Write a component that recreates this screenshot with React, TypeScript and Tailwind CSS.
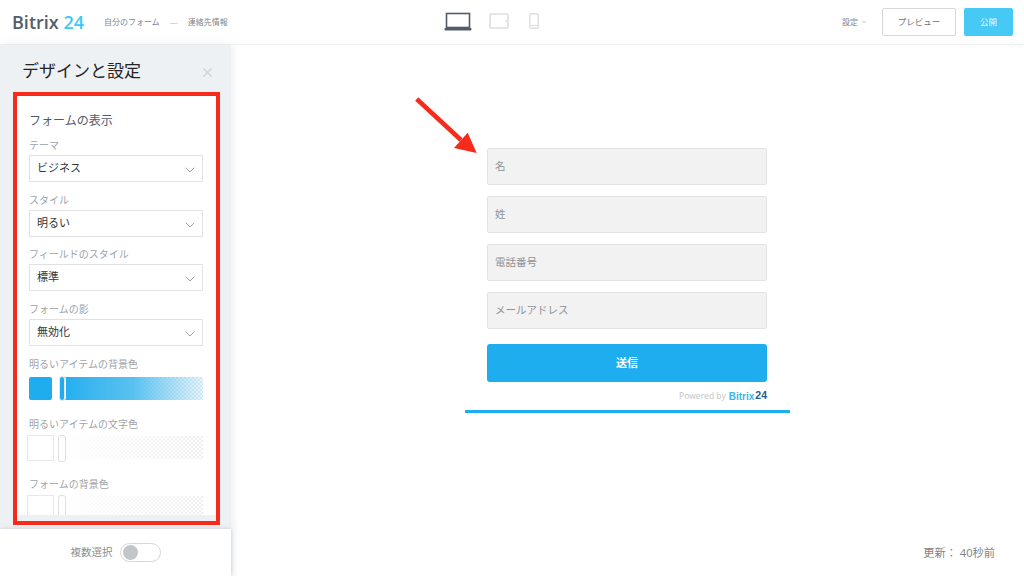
import { ChevronDown, X } from 'lucide-react';

const selects = [
  { label: 'テーマ', value: 'ビジネス' },
  { label: 'スタイル', value: '明るい' },
  { label: 'フィールドのスタイル', value: '標準' },
  { label: 'フォームの影', value: '無効化' },
];

const fields = ['名', '姓', '電話番号', 'メールアドレス'];

function DeviceIcons() {
  return (
    <div className="absolute left-[444px] top-[12px] flex items-start">
      <svg width="28" height="19" viewBox="0 0 28 19" fill="none" className="mr-[17px]">
        <rect x="2.5" y="1.5" width="23" height="14" stroke="#535c69" strokeWidth="1.6" />
        <rect x="0.5" y="16" width="27" height="2.4" rx="0.8" fill="#535c69" />
      </svg>
      <svg width="20" height="16" viewBox="0 0 20 16" fill="none" className="mt-[1px] mr-[20px]">
        <rect x="1" y="1" width="18" height="14" rx="1" stroke="#dcdee0" strokeWidth="1.6" />
        <circle cx="17.2" cy="8" r="0.9" fill="#dcdee0" />
      </svg>
      <svg width="10" height="16" viewBox="0 0 10 16" fill="none" className="mt-[1px]">
        <rect x="0.8" y="0.8" width="8.4" height="14.4" rx="1.5" stroke="#dcdee0" strokeWidth="1.4" />
        <line x1="1" y1="12.6" x2="9" y2="12.6" stroke="#dcdee0" />
      </svg>
    </div>
  );
}

function ColorRow({ label, active, top }: { label: string; active?: boolean; top: string }) {
  return (
    <div className={top}>
      <div className="text-[10px] leading-[14px] text-[#a0a4a9]">{label}</div>
      <div className={active ? 'flex items-center mt-[5px] h-[25px]' : 'flex items-center mt-[4px] h-[26px]'}>
        <div className={active ? 'w-[23px] h-[23px] rounded-[2px] bg-[#1eaeef]' : 'w-[27px] h-[26px] -ml-[2px] border border-[#e8e8e8] bg-white'} />
        <div className={active ? 'relative ml-[10px] w-[141px] h-[23px] bg-[repeating-conic-gradient(#e6edf1_0_25%,#ffffff_0_50%)] bg-[length:4px_4px]' : 'relative ml-[5px] w-[144px] h-[23px] bg-[repeating-conic-gradient(#efefef_0_25%,#ffffff_0_50%)] bg-[length:4px_4px]'}>
          {active && <div className="absolute inset-0 bg-gradient-to-r from-[#1eaeef] via-[#58c1f0] to-[#1eaeef]/10" />}
          {!active && <div className="absolute inset-0 bg-gradient-to-r from-white to-transparent" />}
          <div className={active ? 'absolute -left-[3px] -top-[1px] w-[6px] h-[25px] rounded-[3px] border border-[#e6e6e6] bg-[#1eaeef] outline-1 outline-white' : 'absolute -left-[1px] -top-[1px] w-[8px] h-[27px] rounded-[3px] border border-[#e0e0e0] bg-white'} />
        </div>
      </div>
    </div>
  );
}

export default function App() {
  return (
    <div className="relative w-[1024px] h-[576px] overflow-hidden flex flex-col bg-white font-['Open_Sans','Noto_Sans_CJK_JP',sans-serif]">
      <header className="relative h-[45px] shrink-0 flex items-center border-b border-[#eeeff0] pl-[12px] pr-[11px]">
        <div className="text-[18px] leading-none text-[#535c69] w-[92px] font-semibold">
          Bitrix <span className="text-[#3bc8f5]">24</span>
        </div>
        <div className="flex items-center text-[8px] text-[#80868e]">
          <span>自分のフォーム</span>
          <span className="mx-[10px] text-[#b5b8bc]">—</span>
          <span>連絡先情報</span>
        </div>
        <DeviceIcons />
        <div className="ml-auto flex items-center">
          <span className="text-[8px] text-[#80868e]">設定</span>
          <ChevronDown size={6} className="ml-[3px] text-[#80868e]" />
          <div className="ml-[15px] w-[74px] h-[28px] flex items-center justify-center rounded-[2px] border border-[#d5d7da] text-[8.5px] text-[#6b7178]">プレビュー</div>
          <div className="ml-[8px] w-[49px] h-[28px] flex items-center justify-center rounded-[2px] bg-[#47c9f5] text-[8.5px] text-[#e4f7fd]">公開</div>
        </div>
      </header>

      <div className="flex flex-1 min-h-0">
        <aside className="relative w-[231px] shrink-0 flex flex-col bg-[#eef1f4] shadow-[2px_0_8px_rgba(210,215,222,0.45)]">
          <div className="h-[47px] shrink-0 flex items-start pl-[22px] pr-[16px] pt-[14px]">
            <h1 className="text-[17px] leading-[24px] text-[#222426]">デザインと設定</h1>
            <X size={15} strokeWidth={2.2} className="ml-auto mt-[6px] text-[#cfd3d6]" />
          </div>
          <div className="relative ml-[13px] w-[207px] h-[433px] shrink-0 overflow-hidden border-4 border-[#f72b1c] bg-white pl-[12px] pr-[13px]">
            <div className="mt-[16px] text-[12px] leading-[18px] text-[#535c69]">フォームの表示</div>
            <div className="mt-[8px] flex flex-col gap-[10.5px]">
              {selects.map(s => (
                <div key={s.label}>
                  <div className="text-[10px] leading-[14px] text-[#a0a4a9]">{s.label}</div>
                  <div className="mt-[3px] h-[27px] flex items-center justify-between border border-[#dfe1e3] rounded-[1px] pl-[7px] pr-[4px] text-[11px] text-[#2f3337]">
                    <span>{s.value}</span>
                    <ChevronDown size={16} strokeWidth={1.1} className="mt-[3px] text-[#7d8389]" />
                  </div>
                </div>
              ))}
            </div>
            <ColorRow label="明るいアイテムの背景色" active top="mt-[11px]" />
            <ColorRow label="明るいアイテムの文字色" top="mt-[16px]" />
            <ColorRow label="フォームの背景色" top="mt-[16px]" />
            <div className="absolute left-0 right-0 bottom-0 h-[6px] bg-[#eef1f4]" />
          </div>
          <div className="absolute left-0 bottom-0 w-[231px] h-[47px] flex items-center justify-center bg-white shadow-[0_0_4px_rgba(120,130,140,0.35)]">
            <span className="text-[10.5px] text-[#8a9096]">複数選択</span>
            <div className="ml-[7px] w-[41px] h-[19px] rounded-full border border-[#d5d7da] bg-white flex items-center pl-[2px]">
              <div className="w-[15px] h-[15px] rounded-full bg-[#c1c6cb]" />
            </div>
          </div>
        </aside>

        <main className="relative flex-1">
          <svg width="70" height="64" viewBox="0 0 70 64" className="absolute left-[183px] top-[51px]" fill="none">
            <line x1="2.7" y1="3" x2="47" y2="44" stroke="#f72b1c" strokeWidth="4.5" />
            <polygon points="62.7,57 40,52 53.7,36.7" fill="#f72b1c" />
          </svg>

          <div className="ml-[234px] w-[325px] pt-[103px]">
            <div className="ml-[22px] mr-[23px] flex flex-col gap-[11px]">
              {fields.map(f => (
                <div key={f} className="h-[37px] flex items-center rounded-[2px] border border-[#e3e3e3] bg-[#f2f2f2] pl-[7px] pt-[1px] text-[10.5px] text-[#8f9296]">
                  {f}
                </div>
              ))}
              <div className="mt-[4px] h-[38px] flex items-center justify-center rounded-[3px] bg-[#1eaeef] text-[11px] font-bold text-white">送信</div>
              <div className="-mt-[4px] h-[14px] flex items-center justify-end text-[8.5px] text-[#c2c4c6]">
                Powered by
                <span className="ml-[3px] text-[10px] font-bold text-[#3bb5e6] font-['Liberation_Sans',sans-serif]">Bitrix</span>
                <span className="ml-[1px] text-[10.5px] font-bold text-[#2a5a8c] font-['Liberation_Sans',sans-serif]">24</span>
              </div>
            </div>
            <div className="mt-[7px] h-[3px] bg-[#1eaeef]" />
          </div>

          <div className="absolute right-[29px] bottom-[14px] text-[11.2px] text-[#7f8489]">更新： 40秒前</div>
        </main>
      </div>
    </div>
  );
}
